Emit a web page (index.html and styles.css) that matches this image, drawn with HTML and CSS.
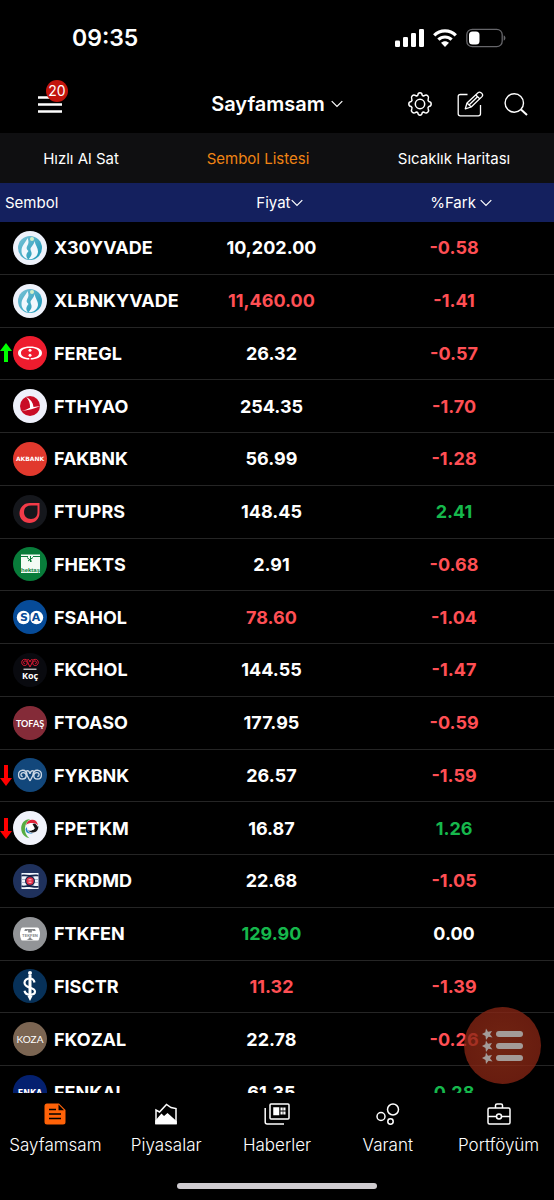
FILE: index.html
```
<!DOCTYPE html>
<html lang="tr">
<head>
<meta charset="utf-8">
<meta name="viewport" content="width=device-width, initial-scale=1">
<title>Sayfamsam</title>
<link rel="stylesheet" href="styles.css">
</head>
<body>
<svg class="sprite" aria-hidden="true">
  <defs>
    <linearGradient id="teal" x1="0" y1="0" x2="1" y2="1"><stop offset="0" stop-color="#7cc4d8"/><stop offset="1" stop-color="#1795b5"/></linearGradient>
    <symbol id="up" viewBox="0 0 12 22"><path d="M6 1 12 9H8V20H4V9H0Z" fill="#0f0"/></symbol>
    <symbol id="down" viewBox="0 0 12 22"><path d="M6 22 12 14H8V1H4V14H0Z" fill="#f00"/></symbol>
    <symbol id="chev" viewBox="0 0 12 8"><path d="M.7 1.200 6 6.500 11.300 1.200" fill="none" stroke="currentColor" stroke-width="1.200"/></symbol>
    <symbol id="viop" viewBox="0 0 34 34"><circle cx="17" cy="17" r="17" fill="#eef2fb"/><circle cx="17" cy="17" r="12" fill="url(#teal)"/><path d="M14.500 7C12.500 12 8.500 14.500 8.500 20c0 4 2.500 7 6.500 8.300-2.500-3-2-5.300.5-8.300-2-1.500-2.300-3-1.300-5 1.500-2.500 1.800-4.500.3-8Z" fill="#f1f7fd"/><path d="M21.500 10c-.5 4-4 6-4 8 0 2 1.500 3 1 5.500-.3 1.700-2 3.300-3 4.800 5 .2 9-2.800 9.500-7.300.3-3.500-2.500-6.500-3.500-11Z" fill="#f1f7fd"/><circle cx="19" cy="8" r="2" fill="#d2efc7"/></symbol>
    <symbol id="eregl" viewBox="0 0 34 34"><circle cx="17" cy="17" r="17" fill="#ee1c2e"/><path fill-rule="evenodd" d="M17 10.500c7 0 12 2.500 12 6.500s-5 6.500-12 6.500S5 21 5 17s5-6.500 12-6.500Zm0 1.500c-5.500 0-9 1.800-9 5s3.500 5 9 5 9-1.800 9-5-3.500-5-9-5Z" fill="#fff"/><circle cx="17" cy="14.300" r="1.500" fill="#fff"/><circle cx="17" cy="19.200" r="1.500" fill="#fff"/><path d="M16 23h2" stroke="#ee1c2e" stroke-width="1.500"/></symbol>
    <symbol id="thy" viewBox="0 0 34 34"><circle cx="17" cy="17" r="17" fill="#eef0fa"/><circle cx="17" cy="17" r="10" fill="#c90c25"/><path d="M13 8c4.500 2 7 5.500 7.500 10l7-1c-6 2.500-12 4.500-19 5 4-1 6.500-2 8.500-3.200.3-4.500-1-7.800-4-10.800Z" fill="#fff"/></symbol>
    <symbol id="akbnk" viewBox="0 0 34 34"><circle cx="17" cy="17" r="17" fill="#e1392d"/><text x="17" y="19.200" class="mark mark-ak">AKBANK</text></symbol>
    <symbol id="tuprs" viewBox="0 0 34 34"><circle cx="17" cy="17" r="17" fill="#15171c"/><path fill-rule="evenodd" d="M26.500 8v10c0 6-4.500 10-10 10S6.500 24 6.500 18.500c0-6 4.500-10.500 10-10.500Zm-2 2.500h-6.500c-4.500 0-7 2.500-7 6.500s2.500 7 7 7 6.500-3 6.500-7Z" fill="#f23b48"/></symbol>
    <symbol id="hekts" viewBox="0 0 34 34"><circle cx="17" cy="17" r="17" fill="#087c3a"/><path d="M8 7.500h19v18.500H8Z" fill="#f3fbf5"/><path d="M8 9.500h7M20 9.500h7M14 10.500l5 4M15 14l5-3.500M17.500 9v6" stroke="#087c3a" stroke-width="1"/><text x="17.500" y="24.500" class="mark mark-hek">hektaş</text></symbol>
    <symbol id="sahol" viewBox="0 0 34 34"><circle cx="17" cy="17" r="17" fill="#064b98"/><circle cx="10.500" cy="17.500" r="6.700" fill="#fff"/><circle cx="23.500" cy="17.500" r="6.700" fill="#fff"/><path d="M17 12v11" stroke="#064b98"/><text x="11" y="21.200" class="mark mark-sa">S</text><text x="23" y="21.200" class="mark mark-sa">A</text></symbol>
    <symbol id="horns" viewBox="0 0 24 12"><path d="M12 11.300 9.300 6C9 2.800 7.500 1 5 1 2.600 1 1 2.900 1 5.200c0 2.400 1.600 4.200 3.900 4.200 2 0 3.400-1.300 3.400-3.200 0-1.700-1.200-2.900-2.800-2.900-1.300 0-2.200.9-2.200 2 0 1 .7 1.700 1.700 1.700M12 11.300 14.700 6C15 2.800 16.500 1 19 1c2.400 0 4 1.900 4 4.200 0 2.400-1.600 4.200-3.900 4.200-2 0-3.400-1.300-3.400-3.200 0-1.700 1.200-2.900 2.800-2.900 1.300 0 2.200.9 2.200 2 0 1-.7 1.700-1.700 1.700M8.200 2C10 .7 11.600 2 12 4.500 12.400 2 14 .7 15.800 2" fill="none" stroke="currentColor" stroke-width="1.300"/></symbol>
    <symbol id="kchol" viewBox="0 0 34 34"><circle cx="17" cy="17" r="17" fill="#090a0f"/><use href="#horns" x="8" y="5.500" width="18" height="9" color="#f01b37"/><path d="M10.500 16.200h13" stroke="#fff" stroke-width="1"/><text x="17" y="25.500" class="mark mark-koc">Koç</text></symbol>
    <symbol id="toaso" viewBox="0 0 34 34"><circle cx="17" cy="17" r="17" fill="#842b38"/><text x="17" y="21" class="mark mark-tofas">TOFAŞ</text></symbol>
    <symbol id="ykbnk" viewBox="0 0 34 34"><circle cx="17" cy="17" r="17" fill="#12477b"/><use href="#horns" x="4.500" y="11" width="25" height="13" color="#ccd8e5"/></symbol>
    <symbol id="petkm" viewBox="0 0 34 34"><circle cx="17" cy="17" r="17" fill="#f1f3fb"/><path d="M17 8.300C11.500 8 8 12.500 8.200 18c.2 5 4 8.500 8.300 9.300-3-2.500-5-6-4.500-10.300.4-4 2.300-7.300 5-8.700Z" fill="#57ad43"/><path d="M13 14c1-4 4-5.700 7-5.200 3 .4 4.500 2.500 5 5.500-2-2-4-2.300-6-2.200-2.500 0-4.500.5-6 1.900Z" fill="#df2439"/><path d="M25.300 15c.3 4-2 6.300-5.300 6.500-2 0-4-.5-5-2.500 1 .7 2 1 3 .8Z" fill="#151517"/><path d="M14 16c-.3 4 2 6 6 6-3.500 1.500-7.500 0-7.500-4Z" fill="#2484c6"/><circle cx="18.500" cy="16" r="3.200" fill="#fff"/><path d="M19.500 13a3 3 0 1 1 3 5.500Z" fill="#151517"/></symbol>
    <symbol id="krdmd" viewBox="0 0 34 34"><circle cx="17" cy="17" r="17" fill="#1f315c"/><path d="M8.500 9h17v16h-17Z" fill="#eef3fa"/><path d="M8.500 11c3-1 5 0 8 0s5-1 9 0v1.500c-4-.5-5 .5-8 .5s-5-1-9-.5ZM8.500 21.500c4 .5 5-.5 8-.5s5 1.500 9 1v1.500c-4 1-6-.5-9-.5s-5 .5-8 0Z" fill="#15244b"/><path d="M8.500 15.500h17M8.500 18.500h17" stroke="#9aa7bf" stroke-width=".8"/><circle cx="17" cy="17" r="5" fill="#15244b"/><circle cx="17" cy="17" r="3.700" fill="#e73047"/><path d="M15.500 15.800h3M15.500 18.200h3" stroke="#fff" stroke-width=".8"/></symbol>
    <symbol id="tkfen" viewBox="0 0 34 34"><circle cx="17" cy="17" r="17" fill="#929497"/><path d="M8 12q0-1.500 1.500-1.500h15Q26 10.500 26 12q2 5 0 10 0 1.500-1.500 1.500h-15Q8 23.500 8 22q-2-5 0-10Z" fill="#fff"/><path d="M12 12h10l.7 2H20c-.5-.7-1-.8-1-.8l-.2 2.300h-3.600L15 13.200s-.5 0-1 .8h-2.700ZM16 20.500h2l.5 1.500 2 1h-7l2-1Z" fill="#85878a"/><text x="17" y="19.500" class="mark mark-tek">TEKFEN</text></symbol>
    <symbol id="isctr" viewBox="0 0 34 34"><circle cx="17" cy="17" r="17" fill="#073159"/><circle cx="17" cy="4" r="2" fill="#fff"/><path d="M15.500 6h3v21h1L17 32l-2.500-5h1Z" fill="#fff"/><path d="M21.500 13.500c-.5-3-2-4-4.700-4-3 0-5.300 1.600-5.300 4.200 0 6 10.500 4 10.500 8.800 0 2-2 3.200-5 3.200-3.500 0-5-1.500-5.500-4" fill="none" stroke="#fff" stroke-width="2.200"/></symbol>
    <symbol id="kozal" viewBox="0 0 34 34"><circle cx="17" cy="17" r="17" fill="#7b6552"/><text x="17" y="21" class="mark mark-koza">KOZA</text></symbol>
    <symbol id="enkai" viewBox="0 0 34 34"><circle cx="17" cy="17" r="17" fill="#04206f"/><text x="17" y="20.500" class="mark mark-enka">ENKA</text></symbol>
  </defs>
</svg>

<div class="app">
  <div class="status">
    <time class="clock">09:35</time>
    <div class="signals">
      <svg width="29" height="18" viewBox="0 0 29 18" fill="#fff"><rect y="11.500" width="5" height="6.500" rx="1.300"/><rect x="8" y="8" width="5" height="10" rx="1.300"/><rect x="16" y="4" width="5" height="14" rx="1.300"/><rect x="24" width="5" height="18" rx="1.300"/></svg>
      <svg width="24" height="18" viewBox="0 0 24 18" fill="none" stroke="#fff" stroke-width="3.200"><path d="M1.200 6.300c6-6 15.600-6 21.600 0M5.400 10.700c3.700-3.600 9.500-3.600 13.200 0"/><path d="M8 13.800c2.300-2.100 5.700-2.100 8 0L12 18Z" fill="#fff" stroke="none"/></svg>
      <svg width="40" height="20" viewBox="0 0 40 20"><rect x=".8" y="1.300" width="35.400" height="17.400" rx="5.500" fill="none" stroke="#66666a" stroke-width="1.300"/><rect x="3" y="3.500" width="10.500" height="13" rx="3.500" fill="#fff"/><path d="M37.700 7.500c2.300.5 2.300 4.500 0 5Z" fill="#66666a"/></svg>
    </div>
  </div>

  <header class="topbar">
    <button class="menu" aria-label="Menü"><svg width="24" height="17" viewBox="0 0 24 17" stroke="#fff" stroke-width="2.400"><path d="M0 1.500h24M0 8.500h24M0 15.500h24"/></svg><span class="badge">20</span></button>
    <button class="title">Sayfamsam<svg width="12" height="8"><use href="#chev"/></svg></button>
    <div class="tools">
      <button class="gear" aria-label="Ayarlar"><svg width="24" height="24" viewBox="0 0 24 24" fill="none" stroke="#fff" stroke-width="1.500"><circle cx="12" cy="12" r="4.700"/><path d="M9.800 3.200Q10 .8 12 .8t2.200 2.400q.8 1 2 .5 2-1.300 3.500 0 1.600 1.600.5 3.500-.6 1.300.6 2.200 2.400.4 2.400 2.600t-2.400 2.600q-1.200.8-.6 2.200 1.100 1.900-.5 3.500-1.500 1.300-3.500 0-1.200-.5-2 .5-.2 2.400-2.200 2.400t-2.200-2.400q-.8-1-2-.5-2 1.300-3.500 0-1.600-1.600-.5-3.500.6-1.400-.6-2.200Q.8 14.200.8 12t2.400-2.600q1.200-.9.600-2.200-1.100-1.900.5-3.500 1.500-1.300 3.500 0 1.200.5 2-.5Z" stroke-linejoin="round"/></svg></button>
      <button aria-label="Düzenle"><svg width="27" height="26" viewBox="0 0 27 26" fill="none" stroke="#fff" stroke-width="1.300" stroke-linejoin="round"><path d="M10.500 3.500H3.300Q1.200 3.500 1.200 5.500v17.300q0 2 2.100 2h18q2.200 0 2.200-2V14"/><path d="M8.300 17.800 10 12 21 1.800q1.500-1.200 3 0l1 .8q1.300 1.500 0 3L14.200 16Z"/><path d="m10 12 4.200 4M18.800 4l4.200 4M12 14l8.500-8.200"/></svg></button>
      <button aria-label="Ara"><svg width="24" height="23" viewBox="0 0 24 23" fill="none" stroke="#fff"><circle cx="10.300" cy="10" r="9.200" stroke-width="1.400"/><path d="m17 16.500 6 5.500" stroke-width="2"/></svg></button>
    </div>
  </header>

  <nav class="tabs">
    <a href="#al-sat">Hızlı Al Sat</a>
    <a href="#liste" class="on" aria-current="page">Sembol Listesi</a>
    <a href="#harita">Sıcaklık Haritası</a>
  </nav>

  <main class="list">
    <table class="quotes">
      <thead><tr>
        <th scope="col">Sembol</th>
        <th scope="col"><button>Fiyat<svg width="12" height="8"><use href="#chev"/></svg></button></th>
        <th scope="col"><button class="spaced">%Fark<svg width="12" height="8"><use href="#chev"/></svg></button></th>
      </tr></thead>
      <tbody>
        <tr><td><div class="sym"><span class="dir"></span><svg class="logo"><use href="#viop"/></svg>X30YVADE</div></td><td>10,202.00</td><td class="neg">-0.58</td></tr>
        <tr><td><div class="sym"><span class="dir"></span><svg class="logo"><use href="#viop"/></svg>XLBNKYVADE</div></td><td class="neg">11,460.00</td><td class="neg">-1.41</td></tr>
        <tr><td><div class="sym"><svg class="dir"><use href="#up"/></svg><svg class="logo"><use href="#eregl"/></svg>FEREGL</div></td><td>26.32</td><td class="neg">-0.57</td></tr>
        <tr><td><div class="sym"><span class="dir"></span><svg class="logo"><use href="#thy"/></svg>FTHYAO</div></td><td>254.35</td><td class="neg">-1.70</td></tr>
        <tr><td><div class="sym"><span class="dir"></span><svg class="logo"><use href="#akbnk"/></svg>FAKBNK</div></td><td>56.99</td><td class="neg">-1.28</td></tr>
        <tr><td><div class="sym"><span class="dir"></span><svg class="logo"><use href="#tuprs"/></svg>FTUPRS</div></td><td>148.45</td><td class="pos">2.41</td></tr>
        <tr><td><div class="sym"><span class="dir"></span><svg class="logo"><use href="#hekts"/></svg>FHEKTS</div></td><td>2.91</td><td class="neg">-0.68</td></tr>
        <tr><td><div class="sym"><span class="dir"></span><svg class="logo"><use href="#sahol"/></svg>FSAHOL</div></td><td class="neg">78.60</td><td class="neg">-1.04</td></tr>
        <tr><td><div class="sym"><span class="dir"></span><svg class="logo"><use href="#kchol"/></svg>FKCHOL</div></td><td>144.55</td><td class="neg">-1.47</td></tr>
        <tr><td><div class="sym"><span class="dir"></span><svg class="logo"><use href="#toaso"/></svg>FTOASO</div></td><td>177.95</td><td class="neg">-0.59</td></tr>
        <tr><td><div class="sym"><svg class="dir"><use href="#down"/></svg><svg class="logo"><use href="#ykbnk"/></svg>FYKBNK</div></td><td>26.57</td><td class="neg">-1.59</td></tr>
        <tr><td><div class="sym"><svg class="dir"><use href="#down"/></svg><svg class="logo"><use href="#petkm"/></svg>FPETKM</div></td><td>16.87</td><td class="pos">1.26</td></tr>
        <tr><td><div class="sym"><span class="dir"></span><svg class="logo"><use href="#krdmd"/></svg>FKRDMD</div></td><td>22.68</td><td class="neg">-1.05</td></tr>
        <tr><td><div class="sym"><span class="dir"></span><svg class="logo"><use href="#tkfen"/></svg>FTKFEN</div></td><td class="pos">129.90</td><td>0.00</td></tr>
        <tr><td><div class="sym"><span class="dir"></span><svg class="logo"><use href="#isctr"/></svg>FISCTR</div></td><td class="neg">11.32</td><td class="neg">-1.39</td></tr>
        <tr><td><div class="sym"><span class="dir"></span><svg class="logo"><use href="#kozal"/></svg>FKOZAL</div></td><td>22.78</td><td class="neg">-0.26</td></tr>
        <tr><td><div class="sym"><span class="dir"></span><svg class="logo"><use href="#enkai"/></svg>FENKAI</div></td><td>61.35</td><td class="pos">0.28</td></tr>
      </tbody>
    </table>
    <button class="fab" aria-label="Listelerim"><svg width="42" height="36" viewBox="0 0 42 36" fill="#a39b98"><rect x="14" y="3" width="27" height="6" rx="3"/><rect x="14" y="15" width="27" height="6" rx="3"/><rect x="14" y="27" width="27" height="6" rx="3"/><path id="star" d="m4 .5 2 3.200 4-.7-2 3.200 2.500 3.300L6.500 8.700 4 12l-.5-4L0 6l3.300-1.800Z"/><use href="#star" y="12"/><use href="#star" y="24"/></svg></button>
  </main>

  <nav class="dock">
    <a href="#sayfam"><svg width="22" height="22" viewBox="0 0 22 22"><path d="M3 .5h12L21.500 7v12q0 2.500-2.500 2.500H3Q.5 21.500.5 19V3Q.5.5 3 .5Z" fill="#ff6208"/><path d="M5 6.500h7M5 11h12M5 15.500h12" stroke="#000" stroke-width="1.600"/><path d="M14.500 1.500v5.700h5.500" fill="#000"/></svg>Sayfamsam</a>
    <a href="#piyasa"><svg width="22" height="22" viewBox="0 0 22 22" fill="none" stroke="#fff" stroke-width="1.500"><path d="M1 20.500V7L4.500 9 11.500 1.500 16 4.500 21 5.500v15Z"/><path d="m1 18 5.500-6.500 2.500 2.500 3.500-3 8.500 7.500v2H1Z" fill="#fff"/></svg>Piyasalar</a>
    <a href="#haber"><svg width="26" height="22" viewBox="0 0 26 22" fill="none" stroke="#fff" stroke-width="1.500"><rect x="6" y="1" width="19" height="15" rx="1"/><path d="M1.200 5v14q0 2 2 2H20"/><rect x="10" y="5" width="4.500" height="6.500" fill="#fff"/><path d="M16.500 6h5M16.500 10h5" stroke-width="3" stroke-dasharray="2.200 .6"/></svg>Haberler</a>
    <a href="#varant"><svg width="24" height="22" viewBox="0 0 24 22" fill="none" stroke="#fff" stroke-width="1.500"><circle cx="17" cy="6.500" r="5.500"/><circle cx="5" cy="13.500" r="4"/><circle cx="14.500" cy="18.500" r="2.700"/></svg>Varant</a>
    <a href="#portfoy"><svg width="24" height="22" viewBox="0 0 24 22" fill="none" stroke="#fff" stroke-width="1.500"><rect x="1" y="5" width="22" height="16" rx="1.500"/><path d="M8.500 5V2.500Q8.500 1 10 1h4q1.500 0 1.500 1.500V5M1 13.500h8.500M14.500 13.500H23"/><circle cx="12" cy="13.500" r="2.500"/></svg>Portföyüm</a>
  </nav>
  <div class="home"></div>
</div>
</body>
</html>
```
FILE: styles.css
```
* { box-sizing: border-box; }
body { margin: 0; background: #000; color: #fff; font-family: Inter, Roboto, sans-serif; }
button { background: none; border: 0; padding: 0; color: inherit; font: inherit; cursor: pointer; }
a { color: inherit; text-decoration: none; }
svg { display: block; flex: none; }
.sprite { position: absolute; width: 0; height: 0; }

.app { display: flex; flex-direction: column; height: 100vh; overflow: hidden; }

.status { display: flex; justify-content: space-between; align-items: center; height: 75px; padding: 0 48px 0 72px; }
.clock { font-size: 23px; font-weight: 600; }
.signals { display: flex; align-items: center; gap: 9px; }

.topbar { display: grid; grid-template-columns: 1fr auto 1fr; align-items: center; height: 58px; padding: 0 26px 0 38px; }
.menu { position: relative; justify-self: start; }
.badge { position: absolute; left: 8px; top: -16px; width: 22px; height: 22px; border-radius: 50%; background: #c2140c; font-size: 14px; line-height: 22px; text-align: center; }
.title { display: flex; align-items: center; gap: 6px; padding-right: 12px; font-size: 20px; font-weight: 600; }
.tools { display: flex; align-items: center; justify-self: end; gap: 20px; }
.gear { margin-right: 5px; }

.tabs { display: grid; grid-template-columns: 162fr 192fr 200fr; align-items: center; height: 50px; background: #0f0f11; font-size: 15px; text-align: center; }
.tabs .on { color: #f08414; }

.list { position: relative; flex: 1; min-height: 0; overflow: hidden; }
.quotes { width: 100%; height: 78vh; table-layout: fixed; border-spacing: 0; }
.quotes th { height: 39px; padding: 0; background: #14205e; font-size: 15px; font-weight: 400; text-align: center; }
.quotes th:first-child { width: 33%; padding-left: 5px; text-align: left; }
.quotes th:nth-child(2) { width: 32%; padding-left: 16px; }
.quotes th:nth-child(3) { padding-left: 8px; }
.quotes th button { display: inline-flex; align-items: center; }
.quotes .spaced { gap: 4px; }
.quotes td { padding: 0; border-bottom: 1px solid #252525; font-size: 18px; font-weight: 700; text-align: center; }
.quotes td:nth-child(3) { padding-right: 6px; }
.sym { display: flex; align-items: center; }
.dir { width: 12px; height: 22px; margin-right: 1px; flex: none; }
.logo { width: 34px; height: 34px; margin-right: 7px; }
.neg { color: #ff4f54; }
.pos { color: #16b84c; }

.mark { fill: #fff; text-anchor: middle; font-family: Inter, sans-serif; font-weight: 700; }
.mark-ak { font-family: "DejaVu Sans", sans-serif; font-size: 6px; }
.mark-hek { fill: #087c3a; font-family: "Liberation Sans", sans-serif; font-size: 6px; }
.mark-sa { fill: #064b98; font-size: 11px; font-family: "DejaVu Sans", sans-serif; }
.mark-koc { font-family: "Open Sans", sans-serif; font-size: 9px; }
.mark-tofas { font-family: Lato, sans-serif; font-size: 9px; }
.mark-tek { fill: #85878a; font-size: 4px; }
.mark-koza { font-family: Lato, sans-serif; font-size: 10px; font-weight: 400; }
.mark-enka { font-family: "DejaVu Sans", sans-serif; font-size: 8px; }

.fab { position: absolute; right: 13px; bottom: 9px; width: 77px; height: 77px; border-radius: 50%; background: radial-gradient(circle, rgba(150, 48, 24, .75), rgba(126, 32, 18, .8)); }
.fab svg { margin: 0 auto; }

.dock { display: grid; grid-template-columns: repeat(5, 1fr); height: 90px; padding-top: 10px; font-size: 17px; font-weight: 300; }
.dock a { display: flex; flex-direction: column; align-items: center; gap: 10px; height: 53px; line-height: 21px; }
.home { align-self: center; width: 36%; height: 6px; margin-bottom: 11px; border-radius: 3px; background: #cfccd0; }
```
